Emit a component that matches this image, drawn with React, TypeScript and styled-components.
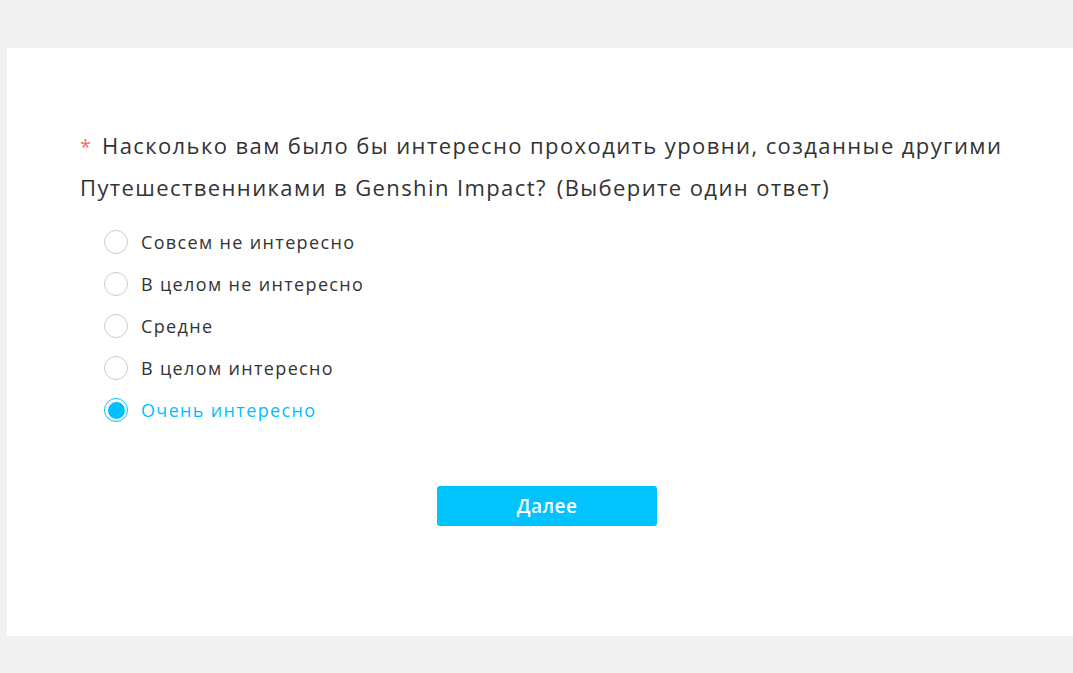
import React, { useState } from "react";
import styled, { createGlobalStyle } from "styled-components";

const Global = createGlobalStyle`
  html, body { margin: 0; padding: 0; background: #f1f1f1; overflow: hidden; }
  body { font-family: "Open Sans", "Noto Sans", sans-serif; }
`;

const Page = styled.div`
  width: 1073px;
  height: 673px;
  padding: 48px 0 0 7px;
  box-sizing: border-box;
  background: #f1f1f1;
  overflow: hidden;
`;

const Card = styled.div`
  width: 1100px;
  height: 588px;
  background: #ffffff;
  box-sizing: border-box;
  padding: 77px 0 0 73px;
`;

const Question = styled.div`
  width: 960px;
  font-size: 22px;
  line-height: 40px;
  color: #333333;
  letter-spacing: 1.4px;
`;

const Star = styled.span`
  color: #f56c6c;
  font-size: 20px;
  margin-right: 11px;
  letter-spacing: 0;
`;

const Hint = styled.span`
  margin-left: 10px;
`;

const Options = styled.div`
  display: flex;
  flex-direction: column;
  margin-top: 14px;
  padding-left: 24px;
`;

const Option = styled.label<{ $checked: boolean }>`
  display: flex;
  align-items: center;
  height: 42px;
  cursor: pointer;
  font-size: 18px;
  letter-spacing: 1.35px;
  color: ${(p) => (p.$checked ? "#00bfff" : "#333333")};
`;

const Radio = styled.span<{ $checked: boolean }>`
  width: 24px;
  height: 24px;
  border-radius: 50%;
  box-sizing: border-box;
  border: 1px solid ${(p) => (p.$checked ? "#00bfff" : "#cccccc")};
  margin-right: 13px;
  display: flex;
  align-items: center;
  justify-content: center;
  background: #fff;
  flex: none;
  &::after {
    content: "";
    width: 17px;
    height: 17px;
    border-radius: 50%;
    background: ${(p) => (p.$checked ? "#00bfff" : "transparent")};
  }
`;

const Footer = styled.div`
  width: 1000px;
  display: flex;
  justify-content: center;
  margin-top: 55px;
`;

const NextButton = styled.button`
  width: 220px;
  height: 40px;
  margin-left: -66px;
  border: none;
  border-radius: 3px;
  background: #00c3ff;
  color: #ffffff;
  font-family: "Open Sans", "Noto Sans", sans-serif;
  font-size: 19px;
  font-weight: 600;
  letter-spacing: 0.5px;
  cursor: pointer;
`;

const options = [
  "Совсем не интересно",
  "В целом не интересно",
  "Средне",
  "В целом интересно",
  "Очень интересно",
];

export default function App() {
  const [sel, setSel] = useState(4);
  return (
    <>
      <Global />
      <Page>
        <Card>
          <Question>
            <Star>*</Star>
            Насколько вам было бы интересно проходить уровни, созданные другими
            Путешественниками в Genshin Impact?
            <Hint>(Выберите один ответ)</Hint>
          </Question>
          <Options>
            {options.map((o, i) => (
              <Option key={o} $checked={sel === i} onClick={() => setSel(i)}>
                <Radio $checked={sel === i} />
                {o}
              </Option>
            ))}
          </Options>
          <Footer>
            <NextButton>Далее</NextButton>
          </Footer>
        </Card>
      </Page>
    </>
  );
}
